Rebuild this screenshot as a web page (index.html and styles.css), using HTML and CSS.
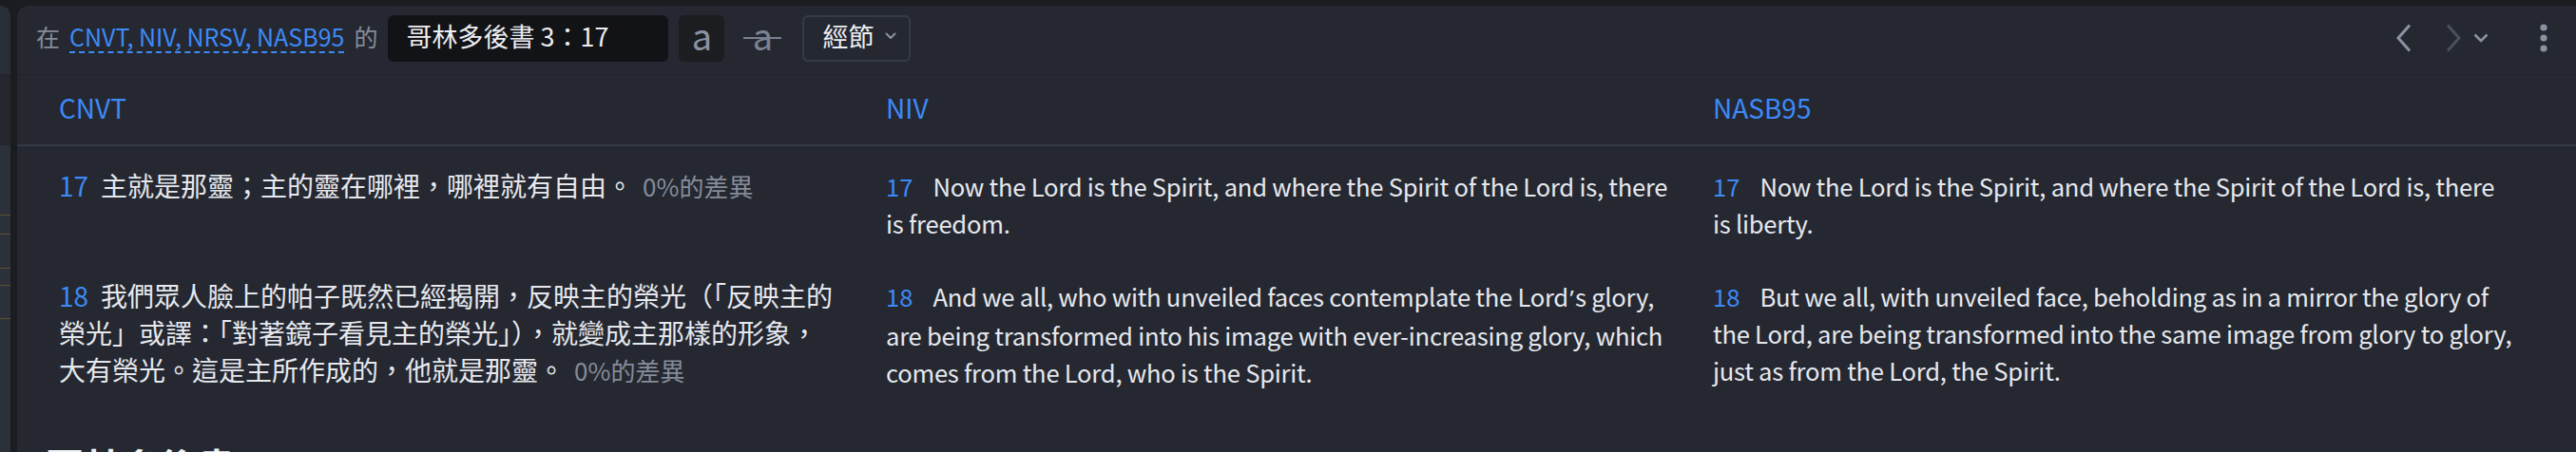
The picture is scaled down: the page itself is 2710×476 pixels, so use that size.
FILE: index.html
```html
<!DOCTYPE html>
<html lang="zh-Hant">
<head>
<meta charset="utf-8">
<title>平行經文</title>
<link rel="stylesheet" href="styles.css">
</head>
<body>
<div class="app">
  <aside class="sidebar">
    <div class="sb-top"></div>
    <div class="sb-mid"></div>
    <div class="sb-body">
      <div class="sb-mark m1"></div>
      <div class="sb-mark m2"></div>
      <div class="sb-mark m3"></div>
      <div class="sb-mark m4"></div>
      <div class="sb-mark m5"></div>
    </div>
  </aside>
  <main class="main">
    <div class="toolbar">
      <div class="query">
        <span class="muted">在</span>
        <span class="link">CNVT, NIV, NRSV, NASB95</span>
        <span class="muted">的</span>
      </div>
      <div class="ref-input"><span class="lift">哥林多後書 3：17</span></div>
      <div class="btn-a">a</div>
      <div class="btn-strike"><span class="strike-a">a</span></div>
      <div class="dropdown"><span class="lift">經節</span>
        <svg class="dd-chev" width="12" height="8" viewBox="0 0 12 8"><path d="M1.5 1.5 L6 6 L10.5 1.5" fill="none" stroke="#8a92a2" stroke-width="2" stroke-linecap="round" stroke-linejoin="round"/></svg>
      </div>
      <div class="nav">
        <svg class="nav-prev" width="18" height="30" viewBox="0 0 18 30"><path d="M15 1.5 L3 15 L15 28.5" fill="none" stroke="#8a92a2" stroke-width="3"/></svg>
        <svg class="nav-next" width="18" height="30" viewBox="0 0 18 30"><path d="M3 1.5 L15 15 L3 28.5" fill="none" stroke="#4a4f5a" stroke-width="3"/></svg>
        <svg class="nav-down" width="16" height="10" viewBox="0 0 16 10"><path d="M1.5 1.5 L8 8 L14.5 1.5" fill="none" stroke="#8a92a2" stroke-width="2.6"/></svg>
        <svg class="kebab" width="8" height="30" viewBox="0 0 8 30"><circle cx="4" cy="4" r="3.6" fill="#8a92a2"/><circle cx="4" cy="15" r="3.6" fill="#8a92a2"/><circle cx="4" cy="26" r="3.6" fill="#8a92a2"/></svg>
      </div>
    </div>

    <div class="row head-row">
      <div class="cell ver">CNVT</div>
      <div class="cell ver">NIV</div>
      <div class="cell ver">NASB95</div>
    </div>

    <div class="row verse-row first">
      <div class="cell zh"><span class="num">17</span>主就是那靈；主的靈在哪裡，哪裡就有自由。<span class="diff">0%的差異</span></div>
      <div class="cell en" lang="en"><span class="num">17</span>Now the Lord is the Spirit, and where the Spirit of the Lord is, there is freedom.</div>
      <div class="cell en" lang="en"><span class="num">17</span>Now the Lord is the Spirit, and where the Spirit of the Lord is, there is liberty.</div>
    </div>

    <div class="row verse-row">
      <div class="cell zh"><span class="num">18</span>我們眾人臉上的帕子既然已經揭開，反映主的榮光（「反映主的榮光」或譯：「對著鏡子看見主的榮光」），就變成主那樣的形象，大有榮光。這是主所作成的，他就是那靈。<span class="diff">0%的差異</span></div>
      <div class="cell en" lang="en"><span class="num">18</span>And we all, who with unveiled faces contemplate the Lord<span class="apos">’</span>s glory, are being transformed into his image with ever-increasing glory, which comes from the Lord, who is the Spirit.</div>
      <div class="cell en" lang="en"><span class="num">18</span>But we all, with unveiled face, beholding as in a mirror the glory of the Lord, are being transformed into the same image from glory to glory, just as from the Lord, the Spirit.</div>
    </div>

    <h2 class="book-title">哥林多後書 4</h2>
  </main>
</div>
</body>
</html>
```
FILE: styles.css
```css
* { box-sizing: border-box; }
html, body {
  margin: 0;
  padding: 0;
  background: #1a1c20;
  height: 476px;
  overflow: hidden;
}
body {
  font-family: "Noto Sans CJK TC", "Noto Sans", sans-serif;
  color: #e6e8ee;
}
.app {
  display: flex;
  gap: 7px;
  padding-top: 6px;
  height: 476px;
}
.sidebar {
  width: 11px;
  flex: none;
  display: flex;
  flex-direction: column;
  border-top-right-radius: 10px;
  overflow: hidden;
}
.sb-top {
  height: 73px;
  background: #292d35;
  border-bottom: 1px solid #1f2227;
}
.sb-mid {
  height: 74px;
  background: #23262c;
}
.sb-body {
  flex: 1;
  background: #2c3038;
  display: flex;
  flex-direction: column;
}
.sb-mark {
  height: 1px;
  background: #5a5230;
}
.m1 { margin-top: 73px; }
.m2 { margin-top: 19px; }
.m3 { margin-top: 35px; }
.m4 { margin-top: 17px; }
.m5 { margin-top: 34px; }

.main {
  flex: 1;
  background: #252831;
  border-top-left-radius: 12px;
  overflow: hidden;
}
.toolbar {
  height: 73px;
  display: flex;
  align-items: center;
  padding: 0 30px 4px 20px;
  border-bottom: 1px solid #1f2228;
}
.query {
  font-size: 25px;
  display: flex;
  align-items: center;
  gap: 10px;
  margin-right: 11px;
  padding-bottom: 4px;
}
.muted { color: #858c99; }
.link {
  color: #3d8af7;
  text-decoration: underline dashed #3d8af7;
  text-decoration-thickness: 2px;
  text-underline-offset: 5px;
}
.lift {
  position: relative;
  top: -3px;
}
.ref-input {
  width: 295px;
  height: 49px;
  background: #121316;
  border-radius: 6px;
  font-size: 27px;
  color: #eceef2;
  display: flex;
  align-items: center;
  padding-left: 19px;
}
.btn-a {
  margin-left: 11px;
  width: 48px;
  height: 49px;
  background: #1b1d21;
  border-radius: 6px;
  color: #8a92a2;
  font-size: 38px;
  display: flex;
  align-items: center;
  justify-content: center;
  padding-bottom: 8px;
}
.btn-strike {
  margin-left: 20px;
  width: 40px;
  height: 49px;
  display: flex;
  align-items: center;
  justify-content: center;
  color: #7a8190;
  font-size: 38px;
  position: relative;
  padding-bottom: 8px;
}
.btn-strike::after {
  content: "";
  position: absolute;
  left: 0;
  right: 0;
  top: 23px;
  height: 2px;
  background: #7a8190;
}
.dropdown {
  margin-left: 22px;
  width: 114px;
  height: 49px;
  border: 2px solid #363b46;
  border-radius: 6px;
  font-size: 27px;
  color: #eceef2;
  display: flex;
  align-items: center;
  padding-left: 19px;
  gap: 12px;
}
.dd-chev { margin-top: -4px; }
.nav {
  margin-left: auto;
  display: flex;
  align-items: center;
}
.nav-prev { margin-right: 34px; }
.nav-next { margin-right: 12px; }
.nav-down { margin-right: 54px; }

.row {
  display: grid;
  grid-template-columns: repeat(3, 845px);
  column-gap: 25px;
  padding-left: 44px;
}
.head-row {
  height: 75px;
  align-items: center;
  padding-bottom: 5px;
  border-bottom: 2px solid #353a45;
}
.ver {
  color: #3d8af7;
  font-size: 28px;
  line-height: 40px;
}
.verse-row {
  padding: 19px 0 19px 44px;
  line-height: 39px;
}
.verse-row.first { padding-top: 22px; }
.cell { min-width: 0; }
.zh {
  font-size: 28px;
  padding-right: 26px;
}
.en {
  font-size: 25.6px;
  letter-spacing: -0.25px;
}
.apos {
  font-family: "Noto Sans", sans-serif;
  font-size: 24px;
  margin: 0 1.5px;
}
.num {
  color: #3d8af7;
  margin-right: 13px;
}
.en .num { margin-right: 21px; letter-spacing: 0; }
.diff {
  color: #858c99;
  font-size: 26px;
  margin-left: 10px;
}
.book-title {
  margin: 36px 0 0 30px;
  font-size: 40px;
  font-weight: 700;
  line-height: 48px;
  color: #f2f3f6;
}
```
